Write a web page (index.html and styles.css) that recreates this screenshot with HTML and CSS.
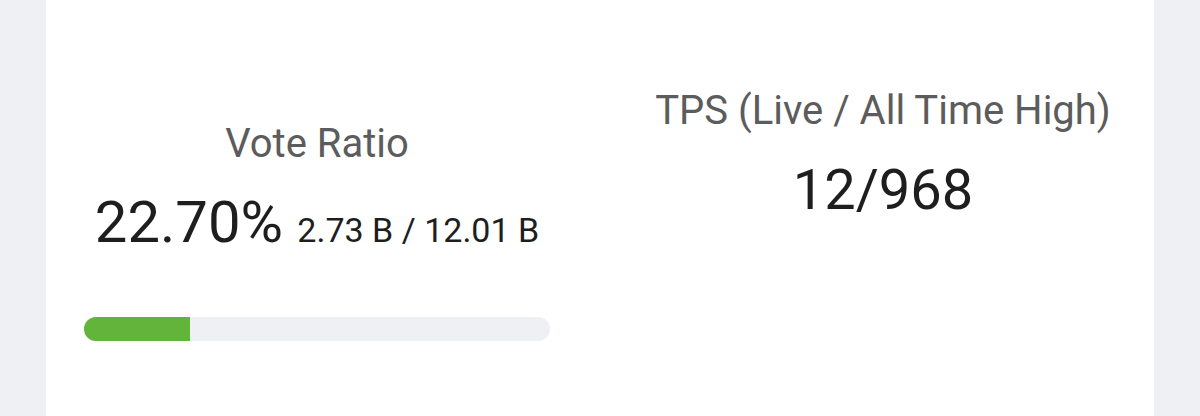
FILE: index.html
```html
<!DOCTYPE html>
<html lang="en">
<head>
    <meta charset="UTF-8">
    <meta name="viewport" content="width=device-width, initial-scale=1.0">
    <title>Stats</title>
    <link rel="stylesheet" href="styles.css">
</head>
<body>
    <div class="card">
        <div class="stat stat-vote">
            <div class="stat-title">Vote Ratio</div>
            <div class="stat-value">22.70% <span class="stat-sub">2.73 B / 12.01 B</span></div>
            <div class="bar">
                <div class="bar-fill" style="width: 22.7%;"></div>
            </div>
        </div>
        <div class="stat stat-tps">
            <div class="stat-title">TPS (Live / All Time High)</div>
            <div class="stat-value">12/968</div>
        </div>
    </div>
</body>
</html>
```

FILE: styles.css
```css
body {
    margin: 0;
    padding: 0 46px;
    background-color: #eff0f4;
    font-family: Roboto, "Liberation Sans", Arial, sans-serif;
    height: 416px;
    overflow: hidden;
}

.card {
    background-color: #fff;
    height: 416px;
    display: grid;
    grid-template-columns: 542px 542px;
    column-gap: 24px;
    align-items: start;
}

.stat {
    display: flex;
    flex-direction: column;
    align-items: center;
}

.stat-vote {
    padding-top: 120px;
}

.stat-tps {
    padding-top: 87px;
}

.stat-title {
    color: #5c5c5c;
    font-size: 40px;
    line-height: 48px;
    white-space: nowrap;
}

.stat-value {
    color: #1e1e1e;
    font-size: 58px;
    line-height: 68px;
    margin-top: 20px;
    white-space: nowrap;
}

.stat-tps .stat-value {
    font-size: 56px;
    margin-top: 21px;
}

.stat-sub {
    font-size: 34px;
}

.bar {
    width: 466px;
    height: 24px;
    margin-top: 53px;
    background-color: #eff0f4;
    border-radius: 12px;
    overflow: hidden;
}

.bar-fill {
    height: 100%;
    background-color: #63b43b;
}
```
